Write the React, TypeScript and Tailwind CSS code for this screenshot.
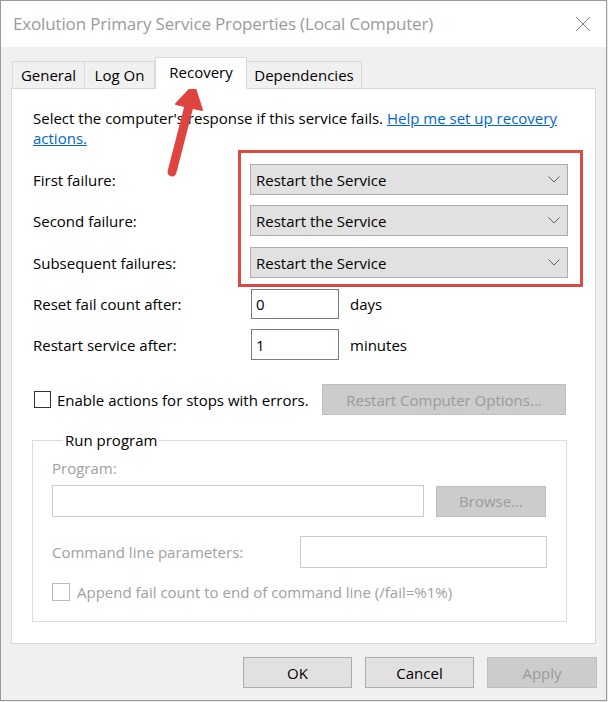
const ui = "font-['Open_Sans','Noto_Sans',sans-serif]";

function Dropdown() {
  return (
    <div className="w-[318px] h-[31px] bg-[#e1e1e1] border border-[#adadad] flex items-center justify-between pl-[5px] pr-[7px]">
      <span>Restart the Service</span>
      <svg width="12" height="7" viewBox="0 0 12 7">
        <path d="M0.5 0.5 L6 6 L11.5 0.5" fill="none" stroke="#606060" strokeWidth="1" />
      </svg>
    </div>
  );
}

function Button({ label, disabled, className }: { label: string; disabled?: boolean; className: string }) {
  return (
    <div
      className={
        'h-[31px] flex items-center justify-center border ' +
        (disabled ? 'bg-[#cccccc] border-[#bfbfbf] text-[#9a9a9a] ' : 'bg-[#e1e1e1] border-[#adadad] text-black ') +
        className
      }
    >
      {label}
    </div>
  );
}

export default function App() {
  return (
    <div className={`relative w-[608px] h-[702px] bg-[#e9ebee] text-[15px] leading-[20px] text-black ${ui}`}>
      <div className="w-[607px] h-[701px] flex flex-col border border-[#9a9a9a] bg-[#f0f0f0]">
        {/* Title bar */}
        <div className="h-[46px] bg-white flex items-center justify-between pl-[12px] pr-[14px]">
          <span className="text-[17px] tracking-[-0.15px] text-[#9b9b9b]">Exolution Primary Service Properties (Local Computer)</span>
          <svg width="16" height="16" viewBox="0 0 16 16" className="mr-[1px]">
            <path d="M1 1 L15 15 M15 1 L1 15" stroke="#7a7a7a" strokeWidth="1" />
          </svg>
        </div>

        <div className="px-[10px] pt-[10px]">
          {/* Tabs */}
          <div className="flex items-end h-[31px] pl-px">
            <div className="w-[73px] h-[27px] border border-b-0 border-[#d9d9d9] flex items-center justify-center">General</div>
            <div className="w-[70px] h-[27px] border border-l-0 border-b-0 border-[#d9d9d9] flex items-center justify-center">Log On</div>
            <div className="relative z-10 w-[92px] h-[32px] -mb-px -mr-[1px] bg-white border border-b-0 border-[#d9d9d9] flex items-start justify-center pt-[4px]">
              Recovery
            </div>
            <div className="w-[116px] h-[27px] border border-b-0 border-[#d9d9d9] flex items-center justify-center">Dependencies</div>
          </div>

          {/* Panel */}
          <div className="h-[556px] bg-white border border-[#d9d9d9] pl-[21px] pt-[19px]">
            <p className="whitespace-nowrap">
              Select the computer's response if this service fails.{' '}
              <span className="text-[#0066cc] underline">Help me set up recovery</span>
              <br />
              <span className="text-[#0066cc] underline">actions.</span>
            </p>

            <div className="mt-[16px] flex flex-col">
              <div className="flex items-center">
                <span className="w-[217px]">First failure:</span>
                <Dropdown />
              </div>
              <div className="flex items-center mt-[10px]">
                <span className="w-[217px]">Second failure:</span>
                <Dropdown />
              </div>
              <div className="flex items-center mt-[11px]">
                <span className="w-[217px]">Subsequent failures:</span>
                <Dropdown />
              </div>
              <div className="flex items-center mt-[11px]">
                <span className="w-[218px]">Reset fail count after:</span>
                <div className="w-[88px] h-[30px] border border-[#7a7a7a] flex items-center pl-[4px]">0</div>
                <span className="ml-[11px]">days</span>
              </div>
              <div className="flex items-center mt-[10px]">
                <span className="w-[218px]">Restart service after:</span>
                <div className="w-[88px] h-[31px] border border-[#7a7a7a] flex items-center pl-[4px]">1</div>
                <span className="ml-[11px]">minutes</span>
              </div>
              <div className="flex items-center mt-[24px]">
                <div className="w-[17px] h-[17px] border border-[#333] ml-px" />
                <span className="ml-[6px] w-[265px]">Enable actions for stops with errors.</span>
                <Button label="Restart Computer Options..." disabled className="w-[244px]" />
              </div>
            </div>

            {/* Run program group */}
            <fieldset className="mt-[15px] -ml-px w-[535px] h-[192px] border border-[#dcdcdc] pl-[19px]">
              <legend className="ml-[11px] px-[2px]">Run program</legend>
              <div className="text-[#a0a0a0] mt-[8px]">Program:</div>
              <div className="flex items-center mt-[7px]">
                <div className="w-[372px] h-[32px] border border-[#cccccc]" />
                <Button label="Browse..." disabled className="ml-[12px] w-[110px]" />
              </div>
              <div className="flex items-center mt-[19px] text-[#a0a0a0]">
                <span className="w-[248px]">Command line parameters:</span>
                <div className="w-[247px] h-[32px] border border-[#cccccc]" />
              </div>
              <div className="flex items-center mt-[14px] text-[#a0a0a0]">
                <div className="w-[18px] h-[18px] border border-[#bcbcbc]" />
                <span className="ml-[7px]">Append fail count to end of command line (/fail=%1%)</span>
              </div>
            </fieldset>
          </div>

          {/* Dialog buttons */}
          <div className="flex justify-end gap-[13px] mt-[13px] -mr-px">
            <Button label="OK" className="w-[109px]" />
            <Button label="Cancel" className="w-[109px]" />
            <Button label="Apply" disabled className="w-[110px]" />
          </div>
        </div>
      </div>

      {/* Annotation: red box and arrow */}
      <div className="absolute left-[238px] top-[150px] w-[345px] h-[137px] border-[3px] border-[#dc4a44] pointer-events-none" />
      <svg className="absolute inset-0 pointer-events-none" width="608" height="702">
        <line x1="189" y1="106" x2="172" y2="172" stroke="#e0443e" strokeWidth="9" strokeLinecap="round" />
        <polygon points="194,85 176,104 202,110" fill="#e0443e" stroke="#e0443e" strokeWidth="2" strokeLinejoin="round" />
      </svg>
    </div>
  );
}
